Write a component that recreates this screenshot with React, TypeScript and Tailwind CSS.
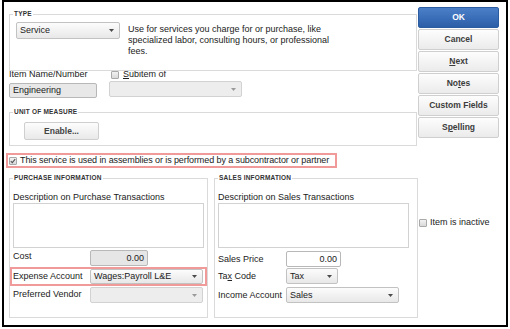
import type { ReactNode } from 'react'

const TEXT = 'text-[9px] leading-[11px] text-[#222]'

function Group({
  title,
  className,
  children,
}: {
  title: string
  className?: string
  children?: ReactNode
}) {
  return (
    <div className={`relative border border-[#dadada] ${className ?? ''}`}>
      <span className="absolute -top-[5px] left-[3px] bg-white px-[1px] text-[6.5px] font-bold leading-[8px] tracking-[0.2px] text-[#333]">
        {title}
      </span>
      {children}
    </div>
  )
}

function Arrow({ light }: { light?: boolean }) {
  return (
    <svg width="5" height="3" viewBox="0 0 5 3" className="shrink-0">
      <path d="M0 0H5L2.5 3Z" fill={light ? '#9a9a9a' : '#4a4a4a'} />
    </svg>
  )
}

function Select({
  value,
  className,
  disabled,
}: {
  value?: string
  className: string
  disabled?: boolean
}) {
  return (
    <div
      className={`flex items-center justify-between rounded-[2px] border pl-[3px] pr-[5px] ${
        disabled
          ? 'border-[#d2d2d2] bg-[#ededed]'
          : 'border-[#c2c2c2] bg-linear-to-b from-[#fcfcfc] to-[#e8e8e8]'
      } ${className}`}
    >
      <span className={TEXT}>{value}</span>
      <Arrow light={disabled} />
    </div>
  )
}

function Check({ checked }: { checked?: boolean }) {
  return (
    <div className="flex h-[8px] w-[8px] shrink-0 items-center justify-center rounded-[1px] border border-[#a9a9a9] bg-linear-to-b from-[#f2f2f2] to-[#d9d9d9]">
      {checked && (
        <svg width="6" height="6" viewBox="0 0 6 6">
          <path d="M0.8 3.2L2.3 4.7L5.2 1.2" stroke="#555" strokeWidth="1.1" fill="none" />
        </svg>
      )}
    </div>
  )
}

function Btn({ children, primary }: { children: ReactNode; primary?: boolean }) {
  return (
    <div
      className={`flex h-[21px] items-center justify-center rounded-[2px] border text-[8.5px] font-bold ${
        primary
          ? 'border-[#2b5ba0] bg-linear-to-b from-[#4b80c9] to-[#2c5ea8] text-white'
          : 'border-[#cfcfcf] bg-linear-to-b from-[#fdfdfd] to-[#ebebeb] text-[#3c3c3c]'
      }`}
    >
      {children}
    </div>
  )
}

function Field({ value, gray, className }: { value?: string; gray?: boolean; className: string }) {
  return (
    <div
      className={`flex items-center justify-end rounded-[2px] border pr-[3px] ${
        gray ? 'border-[#b8b8b8] bg-[#e6e6e6]' : 'border-[#b8b8b8] bg-white'
      } ${className}`}
    >
      <span className={TEXT}>{value}</span>
    </div>
  )
}

export default function App() {
  return (
    <div className="h-[329px] w-[510px] bg-white font-['Liberation_Sans',Arial,sans-serif]">
      <div className="ml-[2px] h-[327px] w-[506px] border-2 border-black pl-[5px]">
        {/* top part */}
        <div className="flex items-start">
          <div className="w-[408px]">
            <Group title="TYPE" className="mt-[12px] h-[57px]">
              <div className="flex pl-[6px] pt-[7px]">
                <Select value="Service" className="h-[17px] w-[104px]" />
                <p className={`ml-[8px] mt-[2px] ${TEXT} leading-[9.5px]`}>
                  Use for services you charge for or purchase, like
                  <br />
                  specialized labor, consulting hours, or professional
                  <br />
                  fees.
                </p>
              </div>
            </Group>

            <div className="-mt-[2px] flex items-start">
              <div className="w-[88px]">
                <div className={TEXT}>Item Name/Number</div>
                <div className="mt-[3px] flex h-[15px] items-center rounded-[2px] border border-[#b8b8b8] bg-[#e8e8e8] pl-[3px]">
                  <span className={TEXT}>Engineering</span>
                </div>
              </div>
              <div className="ml-[12px]">
                <div className="flex h-[11px] items-center">
                  <div className="ml-[2px]">
                    <Check />
                  </div>
                  <span className={`ml-[4px] ${TEXT}`}>
                    <span className="underline">S</span>ubitem of
                  </span>
                </div>
                <Select disabled className="mt-[1px] h-[16px] w-[133px]" />
              </div>
            </div>

            <Group title="UNIT OF MEASURE" className="mt-[14px] h-[34px]">
              <div className="ml-[14px] mt-[9px] flex h-[18px] w-[75px] items-center justify-center rounded-[2px] border border-[#cfcfcf] bg-linear-to-b from-[#fdfdfd] to-[#e9e9e9] text-[8.5px] font-bold text-[#444]">
                Enable...
              </div>
            </Group>
          </div>

          <div className="ml-[1px] mt-[5px] flex w-[81px] flex-col gap-[1px]">
            <Btn primary>OK</Btn>
            <Btn>Cancel</Btn>
            <Btn>
              <span className="underline">N</span>ext
            </Btn>
            <Btn>
              No<span className="underline">t</span>es
            </Btn>
            <Btn>Custom Fields</Btn>
            <Btn>
              S<span className="underline">p</span>elling
            </Btn>
          </div>
        </div>

        {/* highlighted checkbox row */}
        <div className="-ml-[3px] mt-[7px] flex h-[15px] w-[331px] items-center border-2 border-[#f19a9a] pl-[1px]">
          <Check checked />
          <span className={`ml-[3px] whitespace-nowrap tracking-[-0.1px] ${TEXT}`}>
            This service is used in assemblies or is performed by a subcontractor or partner
          </span>
        </div>

        {/* bottom part */}
        <div className="mt-[10px] flex items-start">
          <Group title="PURCHASE INFORMATION" className="h-[140px] w-[199px]">
            <div className="px-[3px]">
              <div className={`mt-[13px] ${TEXT}`}>Description on Purchase Transactions</div>
              <div className="h-[45px] border border-[#d2d2d2] bg-white" />
              <div className="mt-[2px] flex h-[16px] items-start">
                <span className={`w-[77px] ${TEXT} leading-[12px]`}>Cost</span>
                <Field value="0.00" gray className="h-[16px] w-[58px]" />
              </div>
              <div className="-ml-[3px] mt-[1px] flex h-[19px] w-[197px] items-start border-2 border-[#f19a9a] pl-[1px]">
                <span className={`w-[77px] ${TEXT} leading-[15px]`}>Expense Account</span>
                <Select value="Wages:Payroll L&E" className="h-[15px] w-[113px]" />
              </div>
              <div className="mt-[1px] flex h-[16px] items-start">
                <span className={`w-[77px] ${TEXT} leading-[14px]`}>Preferred Vendor</span>
                <Select disabled className="h-[16px] w-[113px]" />
              </div>
            </div>
          </Group>

          <Group title="SALES INFORMATION" className="ml-[6px] h-[140px] w-[204px]">
            <div className="pl-[3px]">
              <div className={`mt-[13px] ${TEXT}`}>Description on Sales Transactions</div>
              <div className="h-[45px] w-[191px] border border-[#d2d2d2] bg-white" />
              <div className="mt-[3px] flex h-[16px] items-center">
                <span className={`w-[68px] ${TEXT}`}>Sales Price</span>
                <Field value="0.00" className="h-[16px] w-[55px]" />
              </div>
              <div className="mt-[1px] flex h-[16px] items-center">
                <span className={`w-[68px] ${TEXT}`}>
                  Ta<span className="underline">x</span> Code
                </span>
                <Select value="Tax" className="h-[16px] w-[52px]" />
              </div>
              <div className="mt-[3px] flex h-[16px] items-center">
                <span className={`w-[68px] ${TEXT}`}>Income Account</span>
                <Select value="Sales" className="h-[16px] w-[113px]" />
              </div>
            </div>
          </Group>

          <div className="ml-[1px] mt-[39px] flex items-center">
            <Check />
            <span className={`ml-[3px] ${TEXT}`}>Item is inactive</span>
          </div>
        </div>
      </div>
    </div>
  )
}
